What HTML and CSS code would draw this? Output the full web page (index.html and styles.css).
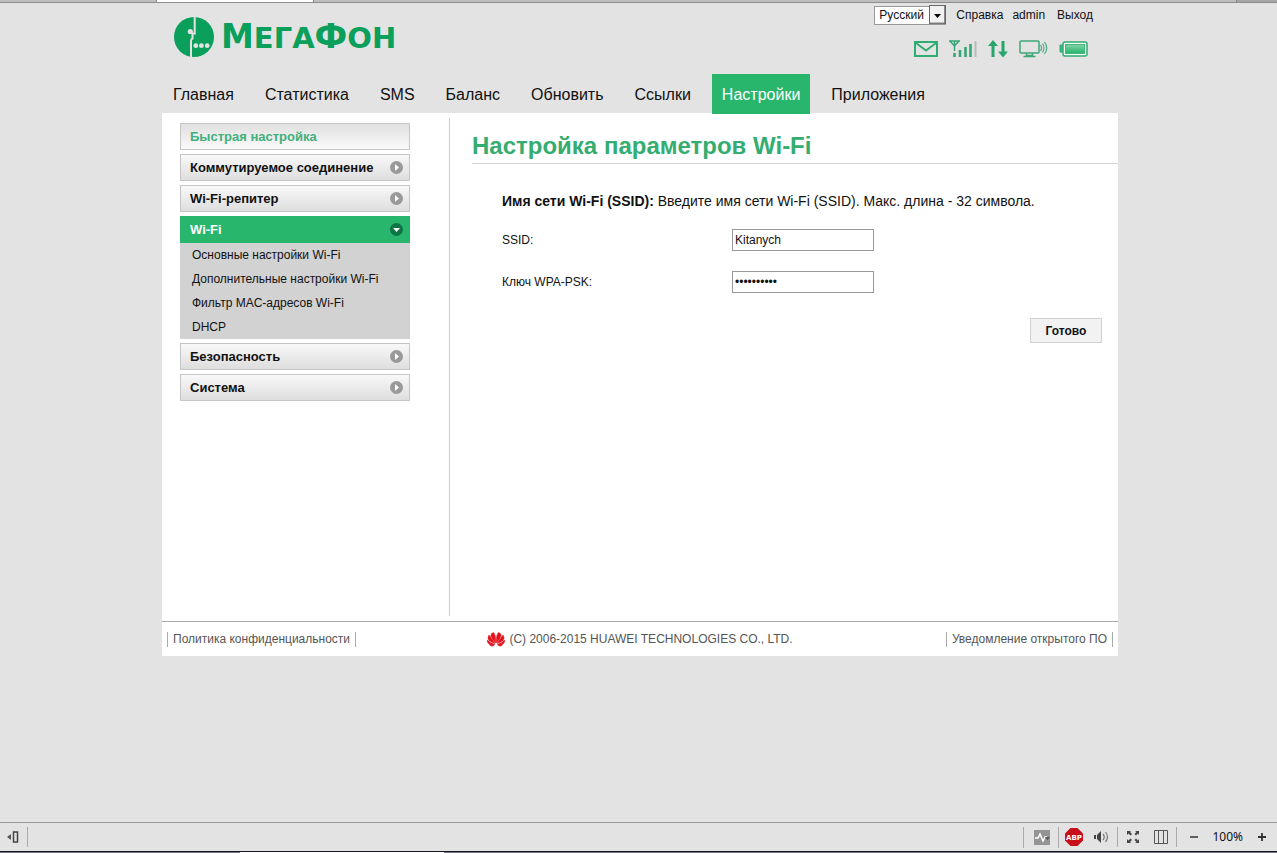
FILE: index.html
```html
<!DOCTYPE html>
<html lang="ru">
<head>
<meta charset="utf-8">
<title>МегаФон — Настройка параметров Wi-Fi</title>
<link rel="stylesheet" href="styles.css">
</head>
<body>
<div class="tab-strip"><span class="tab tab-first"></span><span class="tab tab-current"></span><span class="tab tab-wide"></span><span class="tab tab-end"></span></div>

<div class="page">
  <header class="header">
    <div class="brand">
      <svg class="brand-mark" viewBox="0 0 40 40" aria-hidden="true">
        <circle cx="20" cy="20" r="20" fill="#0a9f5b"/>
        <path d="M20.700 0V16.500H18.500V21.500Q17 22 17 24V40" fill="none" stroke="#e3e3e3" stroke-width="2"/>
        <circle cx="16.300" cy="14.500" r="2.600" fill="#e3e3e3"/>
        <circle cx="21.800" cy="28.700" r="2.400" fill="#e3e3e3"/>
        <circle cx="27.400" cy="28.700" r="2.400" fill="#e3e3e3"/>
        <circle cx="33.200" cy="28.700" r="2.400" fill="#e3e3e3"/>
      </svg>
      <span class="brand-name"><span class="brand-cap">М</span>ЕГА<span class="brand-cap">Ф</span>ОН</span>
    </div>
    <div class="tools">
      <div class="account">
        <div class="language">
          <select class="language-select" aria-label="Язык"><option>Русский</option></select>
          <svg class="language-arrow" viewBox="0 0 17 19" aria-hidden="true"><rect x="0.500" y="0.500" width="16" height="18" fill="#f1f1f1" stroke="#666"/><path d="M15.500 1v17H1" fill="none" stroke="#888"/><path d="M5 9h7l-3.500 4z" fill="#000"/></svg>
        </div>
        <a class="account-link" href="#">Справка</a>
        <a class="account-link account-user" href="#">admin</a>
        <a class="account-link" href="#">Выход</a>
      </div>
      <div class="status">
        <svg width="24" height="18" viewBox="0 0 24 18"><path d="M1 2h22v14H1z" fill="none" stroke="#2fae73" stroke-width="2"/><path d="M2 3l10 7.500L22 3" fill="none" stroke="#2fae73" stroke-width="2"/></svg>
        <svg width="28" height="18" viewBox="0 0 28 18"><path d="M0 1h11M5.500 1v10M1 1l4.500 5L10 1" fill="none" stroke="#35a675" stroke-width="1.500"/><path d="M5.500 13v4M11 10v7M16.500 7v10M21.500 4v13" stroke="#35a675" stroke-width="2.600"/><path d="M26.500 1v16" stroke="#bbb" stroke-width="2"/></svg>
        <svg width="20" height="18" viewBox="0 0 20 18"><path d="M5 0l5 6H6.500v11h-3V6H0zM15 17.500l-5-6h3.500V1h3v10.500H20z" fill="#27a56b"/></svg>
        <svg width="29" height="18" viewBox="0 0 29 18"><rect x="1" y="1" width="19" height="12" rx="1" fill="none" stroke="#3fa67a" stroke-width="1.500"/><path d="M7.500 13v2.500h6V13M4.500 16.500h12" fill="none" stroke="#3fa67a" stroke-width="1.500"/><path d="M21.500 5q2 3 0 6M23.500 3.500q3 4 0 9M25.500 2q4.500 6 0 12" fill="none" stroke="#3fa67a" stroke-width="1.100"/></svg>
        <svg width="29" height="18" viewBox="0 0 29 18"><defs><linearGradient id="charge" x2="0" y2="1"><stop stop-color="#86d3a7"/><stop offset="1" stop-color="#22b469"/></linearGradient></defs><path d="M4 5H1v7h3" fill="#3db57c" stroke="#2fae73"/><rect x="4" y="2" width="24" height="14" rx="2" fill="#f2faf5" stroke="#2fae73" stroke-width="1.500"/><rect x="6.500" y="4.500" width="19" height="9" fill="url(#charge)" stroke="#44b77d"/></svg>
      </div>
    </div>
  </header>

  <nav class="nav">
    <a class="nav-link" href="#">Главная</a>
    <a class="nav-link" href="#">Статистика</a>
    <a class="nav-link" href="#">SMS</a>
    <a class="nav-link" href="#">Баланс</a>
    <a class="nav-link" href="#">Обновить</a>
    <a class="nav-link" href="#">Ссылки</a>
    <a class="nav-link nav-link-active" href="#">Настройки</a>
    <a class="nav-link" href="#">Приложения</a>
  </nav>

  <div class="panel">
    <div class="columns">
      <aside class="sidebar">
        <a class="menu-item menu-item-quick" href="#">Быстрая настройка</a>
        <a class="menu-item" href="#">Коммутируемое соединение <svg class="menu-icon" viewBox="0 0 13 13"><circle cx="6.500" cy="6.500" r="6.500" fill="#999"/><path d="M5 3l4 3.500L5 10z" fill="#fff"/></svg></a>
        <a class="menu-item" href="#">Wi-Fi-репитер <svg class="menu-icon" viewBox="0 0 13 13"><circle cx="6.500" cy="6.500" r="6.500" fill="#999"/><path d="M5 3l4 3.500L5 10z" fill="#fff"/></svg></a>
        <div class="menu-group">
          <a class="menu-item menu-item-open" href="#">Wi-Fi <svg class="menu-icon" viewBox="0 0 13 13"><circle cx="6.500" cy="6.500" r="6.500" fill="#0c7445"/><path d="M3 5h7l-3.500 4z" fill="#fff"/></svg></a>
          <div class="submenu">
            <a class="submenu-link" href="#">Основные настройки Wi-Fi</a>
            <a class="submenu-link" href="#">Дополнительные настройки Wi-Fi</a>
            <a class="submenu-link" href="#">Фильтр MAC-адресов Wi-Fi</a>
            <a class="submenu-link" href="#">DHCP</a>
          </div>
        </div>
        <a class="menu-item" href="#">Безопасность <svg class="menu-icon" viewBox="0 0 13 13"><circle cx="6.500" cy="6.500" r="6.500" fill="#999"/><path d="M5 3l4 3.500L5 10z" fill="#fff"/></svg></a>
        <a class="menu-item" href="#">Система <svg class="menu-icon" viewBox="0 0 13 13"><circle cx="6.500" cy="6.500" r="6.500" fill="#999"/><path d="M5 3l4 3.500L5 10z" fill="#fff"/></svg></a>
      </aside>
      <main class="content">
        <h1 class="title">Настройка параметров Wi-Fi</h1>
        <form class="form">
          <p class="hint"><b>Имя сети Wi-Fi (SSID):</b> Введите имя сети Wi-Fi (SSID). Макс. длина - 32 символа.</p>
          <div class="field"><label class="field-label" for="ssid">SSID:</label><input class="field-input" id="ssid" type="text" value="Kitanych"></div>
          <div class="field"><label class="field-label" for="key">Ключ WPA-PSK:</label><input class="field-input" id="key" type="password" value="0000000000"></div>
          <div class="actions"><button class="button" type="button">Готово</button></div>
        </form>
      </main>
    </div>
    <footer class="footer">
      <a class="footer-link" href="#">Политика конфиденциальности</a>
      <span class="copyright">
        <svg width="18" height="15" viewBox="0 0 18 15"><g fill="#e3141c" stroke="#e3141c" stroke-width="0.500"><path d="M8.700 11Q9 3 6.500.500 3.500 1 4 4 5 7 8.700 11zM8 11.500Q4 5 2 3 0 6 2 8.500 4.500 10.500 8 11.500zM7.500 12.300Q3 11 .300 8 0 11.500 3 12.500 5.500 13 7.500 12.300zM7.500 12.800H2.500Q5 15.500 7.500 12.800z"/><path d="M9.300 11Q9 3 11.500.500 14.500 1 14 4 13 7 9.300 11zM10 11.500Q14 5 16 3 18 6 16 8.500 13.500 10.500 10 11.500zM10.500 12.300Q15 11 17.700 8 18 11.500 15 12.500 12.500 13 10.500 12.300zM10.500 12.800H15.500Q13 15.500 10.500 12.800z"/></g></svg>
        (C) 2006-2015 HUAWEI TECHNOLOGIES CO., LTD.
      </span>
      <a class="footer-link footer-link-end" href="#">Уведомление открытого ПО</a>
    </footer>
  </div>
</div>

<div class="statusbar">
  <button class="bar-button bar-left" type="button" aria-label="Панель"><svg width="14" height="14" viewBox="0 0 14 14"><path d="M5 4v6L1 7z" fill="#555"/><rect x="7.500" y="2" width="4" height="10" fill="none" stroke="#444" stroke-width="1.500"/></svg></button>
  <div class="bar-tools">
    <button class="bar-button bar-activity" type="button" aria-label="Активность"><svg width="16" height="15" viewBox="0 0 16 15"><path d="M0 0h16v15H0z" fill="#949494"/><path d="M1 8h3l2-4 3 7 2-4h2" fill="none" stroke="#fff" stroke-width="1.500"/><path d="M11 7h5l-2.500 3z" fill="#555"/></svg></button>
    <button class="bar-button bar-block" type="button" aria-label="Adblock Plus"><svg width="18" height="18" viewBox="0 0 18 18"><path d="M5.500 0h7L18 5.500v7L12.500 18h-7L0 12.500v-7z" fill="#c8101a"/><text x="9" y="12" class="abp">ABP</text></svg></button>
    <button class="bar-button bar-sound" type="button" aria-label="Звук"><svg width="16" height="14" viewBox="0 0 16 14"><path d="M0 5h2v4H0zM3 5l4-4v12L3 9z" fill="#444"/><path d="M9 4q2.500 3 0 6M11.500 2q4 5 0 10" fill="none" stroke="#777" stroke-width="1.200"/></svg></button>
    <button class="bar-button bar-full" type="button" aria-label="Во весь экран"><svg width="12" height="12" viewBox="0 0 12 12"><path d="M0 0h4L3 1l2 2-1.500 1.500-2-2L0 4zM12 0v4l-1-1.500-2 2L7.500 3l2-2L8 0zM0 12V8l1.500 1.500 2-2L5 9l-2 2 1 1zM12 12H8l1.500-1-2-2L9 7.500l2 2L12 8z" fill="#444"/></svg></button>
    <button class="bar-button bar-columns" type="button" aria-label="Колонки"><svg width="14" height="14" viewBox="0 0 14 14"><path d="M.500.500h13v13H.500zM4.500 0v14M9.500 0v14" fill="none" stroke="#555"/></svg></button>
    <button class="bar-button bar-minus" type="button" aria-label="Уменьшить"><svg width="8" height="8" viewBox="0 0 8 8"><path d="M0 4h8" stroke="#333" stroke-width="1.500"/></svg></button>
    <span class="zoom">100%</span>
    <button class="bar-button" type="button" aria-label="Увеличить"><svg width="8" height="8" viewBox="0 0 8 8"><path d="M0 4h8M4 0v8" stroke="#333" stroke-width="1.800"/></svg></button>
  </div>
</div>
<div class="desktop-edge"><span class="edge-dark"></span><span class="edge-light"></span><span class="edge-dark edge-fill"></span></div>
</body>
</html>
```
FILE: styles.css
```css
* { box-sizing: border-box; }

body {
  margin: 0;
  min-height: 100vh;
  display: flex;
  flex-direction: column;
  background: #e3e3e3;
  color: #111;
  font-family: "Liberation Sans", Arial, sans-serif;
  font-size: 12px;
}

a { color: inherit; text-decoration: none; }
svg { display: block; flex: none; }

.tab-strip {
  display: flex;
  height: 3px;
  background: #bdbdbd;
  border-bottom: 1px solid #8d8d8d;
}
.tab { border-right: 1px solid #8d8d8d; }
.tab-first { width: 157px; }
.tab-current { width: 157px; background: #fff; }
.tab-wide { flex: 1; }
.tab-end { width: 40px; border: 0; background: #a5a5a5; }

.page {
  width: 100%;
  max-width: 959px;
  margin: 0 auto;
  padding-left: 3px;
  flex: 1;
}

.header {
  display: flex;
  justify-content: space-between;
  height: 71px;
  padding: 2px 25px 0 12px;
}
.brand { display: flex; align-items: flex-start; gap: 7px; padding-top: 12px; }
.brand-mark { width: 40px; height: 40px; }
.brand-name {
  font: bold 29px/40px "DejaVu Sans", sans-serif;
  color: #0a9f5b;
}
.brand-cap { font-size: 33px; }

.tools { display: flex; flex-direction: column; align-items: flex-end; gap: 16px; }
.account { display: flex; align-items: center; height: 19px; line-height: 20px; }
.language { position: relative; width: 72px; height: 19px; margin-right: 10px; }
.language-select {
  appearance: none;
  width: 100%;
  height: 100%;
  padding: 0 18px 0 4px;
  border: 1px solid #999;
  border-radius: 0;
  background: #fff;
  color: #111;
  font: 12px "Liberation Sans", Arial, sans-serif;
}
.language-arrow {
  position: absolute;
  top: 0;
  right: 0;
  width: 17px;
  height: 19px;
  pointer-events: none;
}
.account-user { margin: 0 12px 0 9px; }
.status { display: flex; gap: 11px; padding-right: 5px; }

.nav { display: flex; gap: 11px; padding-left: 1px; height: 39px; }
.nav-link {
  height: 40px;
  padding: 0 10px;
  font-size: 16px;
  line-height: 42px;
  white-space: nowrap;
}
.nav-link-active { background: #28b56c; color: #fff; z-index: 1; }

.panel { background: #fff; }
.columns { display: flex; min-height: 508px; padding: 5px 0; }
.sidebar {
  width: 288px;
  flex: none;
  display: flex;
  flex-direction: column;
  gap: 4px;
  padding: 5px 39px 0 18px;
  border-right: 1px solid #ccc;
}
.menu-item {
  display: flex;
  align-items: center;
  justify-content: space-between;
  height: 27px;
  padding: 0 6px 0 9px;
  border: 1px solid #c6c6c6;
  background: linear-gradient(#f8f8f8, #dedede);
  font-size: 13px;
  font-weight: bold;
  white-space: nowrap;
}
.menu-item-quick { background: linear-gradient(#e0e0e0, #fafafa); color: #42b07c; }
.menu-item-open { border-color: #28b56c; background: #28b56c; color: #fff; }
.menu-icon { width: 13px; height: 13px; }
.submenu { background: #d2d2d2; }
.submenu-link {
  display: block;
  height: 24px;
  padding-left: 12px;
  line-height: 24px;
  white-space: nowrap;
}

.content { flex: 1; padding-left: 22px; }
.title {
  margin: 0;
  height: 46px;
  padding-top: 14px;
  border-bottom: 1px solid #d4d4d4;
  color: #35ad70;
  font-size: 24px;
  line-height: 28px;
}
.form { padding: 27px 16px 0 30px; }
.hint { margin: 0 0 18px; font-size: 14px; line-height: 20px; }
.field { display: flex; align-items: center; height: 22px; margin-bottom: 20px; }
.field-label { width: 230px; }
.field-input {
  width: 142px;
  height: 22px;
  padding: 0 2px;
  border: 1px solid #999;
  background: #fff;
  color: #111;
  font: 12px "Liberation Sans", Arial, sans-serif;
}
.actions { display: flex; justify-content: flex-end; padding-top: 5px; }
.button {
  width: 72px;
  height: 25px;
  padding: 0;
  border: 1px solid #d0d0d4;
  background: #f2f2f3;
  color: #111;
  font: bold 12px "Liberation Sans", Arial, sans-serif;
}

.footer {
  display: grid;
  grid-template-columns: 1fr auto 1fr;
  align-items: center;
  height: 35px;
  padding: 0 5px;
  border-top: 1px solid #aaa;
  color: #555;
}
.footer-link {
  justify-self: start;
  padding: 0 5px;
  border: solid #aaa;
  border-width: 0 1px;
  line-height: 15px;
}
.footer-link-end { justify-self: end; }
.copyright { display: flex; align-items: center; gap: 4px; }

.statusbar {
  display: flex;
  align-items: center;
  justify-content: space-between;
  height: 29px;
  padding: 0 11px 0 6px;
  border-top: 1px solid #999;
}
.bar-button { padding: 0; border: 0; background: none; }
.bar-left { padding: 3px 7px 3px 0; border-right: 1px solid #aaa; }
.bar-tools { display: flex; align-items: center; }
.bar-activity { padding: 3px 8px 3px 10px; border: solid #aaa; border-width: 0 1px; }
.bar-block { padding-left: 6px; }
.bar-sound { padding: 3px 7px 3px 11px; border-right: 1px solid #aaa; }
.bar-full { padding-left: 9px; }
.bar-columns { padding: 3px 8px 3px 15px; border-right: 1px solid #aaa; }
.bar-minus { padding-left: 13px; }
.zoom { padding: 0 15px 2px 14px; font: 12px "Noto Sans", sans-serif; }
.abp { fill: #fff; font: bold 7px "DejaVu Sans", sans-serif; text-anchor: middle; }

.desktop-edge { display: flex; height: 2px; border-top: 1px solid #15151f; }
.edge-dark { width: 240px; background: #777a85; }
.edge-light { width: 204px; background: #fff; }
.edge-fill { flex: 1; }
```
